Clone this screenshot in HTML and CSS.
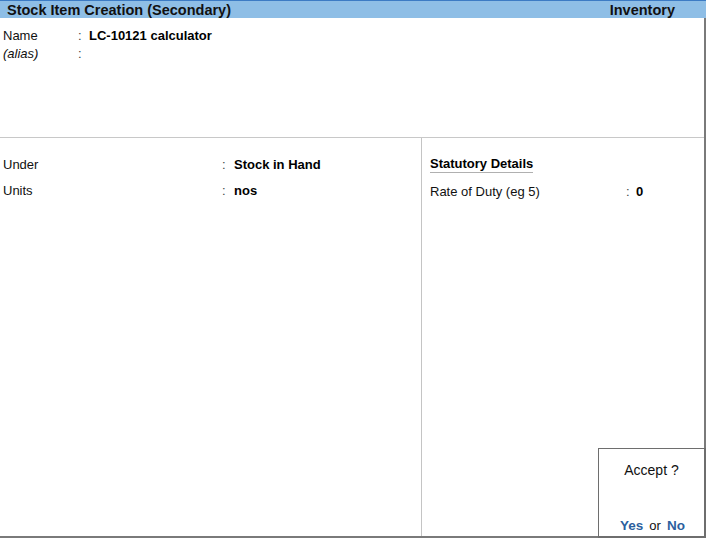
FILE: index.html
```html
<!DOCTYPE html>
<html>
<head>
<meta charset="utf-8">
<link rel="stylesheet" href="styles.css">
</head>
<body>
<div class="app">
  <div class="titlebar">
    <span class="title">Stock Item Creation (Secondary)</span>
    <span class="module">Inventory</span>
  </div>
  <div class="main">
    <div class="top">
      <div class="row name-row">
        <span class="lbl lbl-top">Name</span>
        <span class="colon">:</span>
        <span class="val">LC-10121 calculator</span>
      </div>
      <div class="row name-row">
        <span class="lbl lbl-top alias">(alias)</span>
        <span class="colon">:</span>
        <span class="val"></span>
      </div>
    </div>
    <div class="bottom">
      <div class="left">
        <div class="row brow">
          <span class="lbl lbl-left">Under</span>
          <span class="colon">:</span>
          <span class="val">Stock in Hand</span>
        </div>
        <div class="row brow">
          <span class="lbl lbl-left">Units</span>
          <span class="colon">:</span>
          <span class="val">nos</span>
        </div>
      </div>
      <div class="right">
        <div class="section-head"><span class="head-text">Statutory Details</span></div>
        <div class="row rrow">
          <span class="lbl lbl-right">Rate of Duty (eg 5)</span>
          <span class="colon">:</span>
          <span class="val">0</span>
        </div>
      </div>
    </div>
  </div>
  <div class="accept">
    <div class="accept-q">Accept ?</div>
    <div class="accept-a"><span class="opt">Yes</span><span class="or">or</span><span class="opt">No</span></div>
  </div>
</div>
</body>
</html>
```
FILE: styles.css
```css
html, body {
  margin: 0;
  padding: 0;
  background: #ffffff;
}
body {
  font-family: "Liberation Sans", Arial, sans-serif;
  font-size: 13px;
  color: #000000;
}
.app {
  position: relative;
  width: 706px;
  height: 538px;
  display: flex;
  flex-direction: column;
  overflow: hidden;
}
.titlebar {
  height: 17px;
  border-top: 1px solid #3c7bc4;
  background: #8ebee6;
  display: flex;
  justify-content: space-between;
  align-items: center;
  padding: 0 31px 0 7px;
  font-weight: bold;
  font-size: 14.5px;
  color: #111111;
}
.main {
  flex: 1;
  display: flex;
  flex-direction: column;
  border-right: 2px solid #7a7a7a;
  border-bottom: 2px solid #7a7a7a;
}
.top {
  height: 120px;
  border-bottom: 1px solid #c8c8c8;
  padding-top: 8px;
  box-sizing: border-box;
}
.row {
  display: flex;
  align-items: center;
}
.name-row {
  height: 18px;
}
.lbl {
  flex: none;
  color: #111111;
}
.lbl-top {
  width: 78px;
  padding-left: 3px;
  box-sizing: border-box;
}
.alias {
  font-style: italic;
}
.colon {
  width: 11px;
  flex: none;
  color: #444444;
}
.val {
  font-weight: bold;
}
.bottom {
  flex: 1;
  display: flex;
}
.left {
  width: 422px;
  border-right: 1px solid #c4c4c4;
  padding-top: 13px;
  box-sizing: border-box;
}
.brow {
  height: 26px;
}
.lbl-left {
  width: 222px;
  padding-left: 3px;
  box-sizing: border-box;
}
.left .colon {
  width: 12px;
}
.right {
  flex: 1;
  padding: 18px 0 0 8px;
}
.section-head {
  height: 20px;
}
.head-text {
  display: inline-block;
  font-weight: bold;
  border-bottom: 1px solid #b0b0b0;
  line-height: 16px;
}
.rrow {
  height: 22px;
  margin-top: 4px;
}
.lbl-right {
  width: 196px;
}
.right .colon {
  width: 10px;
}
.accept {
  position: absolute;
  right: 0;
  bottom: 0;
  width: 108px;
  height: 90px;
  box-sizing: border-box;
  border: 1px solid #6e6e6e;
  border-right-width: 2px;
  border-bottom-width: 2px;
  background: #ffffff;
  display: flex;
  flex-direction: column;
  align-items: center;
}
.accept-q {
  margin-top: 13px;
  font-size: 14px;
  color: #111111;
}
.accept-a {
  margin-top: auto;
  margin-bottom: 3px;
  font-size: 13.5px;
  color: #111111;
  display: flex;
  align-items: baseline;
  gap: 6px;
  padding-left: 2px;
}
.or {
  font-size: 13px;
}
.opt {
  color: #2c5f9e;
  font-weight: bold;
}
```
